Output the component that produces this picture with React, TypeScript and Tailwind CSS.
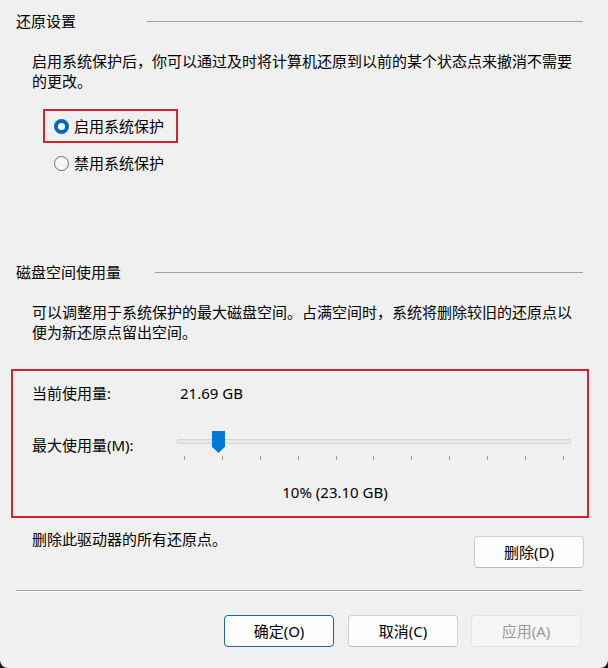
import React from "react";

function Radio({ checked }: { checked: boolean }) {
  return checked ? (
    <span className="flex h-[15px] w-[15px] shrink-0 items-center justify-center rounded-full bg-[#0067c0]">
      <span className="h-[7px] w-[7px] rounded-full bg-white" />
    </span>
  ) : (
    <span className="h-[15px] w-[15px] shrink-0 rounded-full border border-[#6f6f6f] bg-[#f6f6f6]" />
  );
}

function Btn({
  children,
  variant = "normal",
  className = "",
}: {
  children: React.ReactNode;
  variant?: "normal" | "primary" | "disabled";
  className?: string;
}) {
  const styles =
    variant === "primary"
      ? "border-[#1d63a8] bg-[#fdfdfd] text-black"
      : variant === "disabled"
      ? "border-[#e3e3e3] bg-[#f5f5f5] text-[#9a9a9a]"
      : "border-[#d0d0d0] border-b-[#bcbcbc] bg-[#fdfdfd] text-black";
  return (
    <div
      className={`flex h-[32px] w-[110px] items-center justify-center rounded-[4px] border ${styles} ${className}`}
    >
      {children}
    </div>
  );
}

export default function App() {
  return (
    <div className="h-[668px] w-[608px] bg-[#1c1c1c]">
      <div className="flex h-full w-full flex-col rounded-b-[8px] bg-[#f0f0f0] font-['Noto_Sans','Noto_Sans_CJK_SC',sans-serif] text-[15px] leading-[20px] text-black">
        {/* Section 1 heading */}
        <div className="mt-[11px] flex items-center pl-4 pr-[25px]">
          <span>还原设置</span>
          <div className="ml-[71px] h-px flex-1 bg-[#a0a0a0]" />
        </div>

        <p className="mt-[20px] pl-[32px]">
          启用系统保护后，你可以通过及时将计算机还原到以前的某个状态点来撤消不需要
          <br />
          的更改。
        </p>

        <div className="ml-[43px] mt-[18px] flex w-fit items-center border-2 border-[#d3212d] py-[5px] pl-[9px] pr-[12px]">
          <Radio checked />
          <span className="ml-[5px]">启用系统保护</span>
        </div>

        <div className="ml-[54px] mt-[10px] flex items-center">
          <Radio checked={false} />
          <span className="ml-[5px]">禁用系统保护</span>
        </div>

        {/* Section 2 heading */}
        <div className="mt-[89px] flex items-center pl-4 pr-[25px]">
          <span>磁盘空间使用量</span>
          <div className="ml-[34px] h-px flex-1 bg-[#a0a0a0]" />
        </div>

        <p className="mt-[20px] pl-[32px]">
          可以调整用于系统保护的最大磁盘空间。占满空间时，系统将删除较旧的还原点以
          <br />
          便为新还原点留出空间。
        </p>

        <div className="ml-[11px] mt-[27px] box-border flex h-[149px] w-[578px] flex-col border-2 border-[#d3212d] pt-[12px]">
          <div className="flex pl-[19px]">
            <span className="w-[148px]">当前使用量:</span>
            <span>21.69 GB</span>
          </div>

          <div className="mt-[26px] flex h-[32px] items-center pl-[19px]">
            <span className="w-[145px]">最大使用量(M):</span>
            <div className="relative h-[32px] w-[394px]">
              <div className="mt-[10px] h-[5px] w-full rounded-[1px] border border-[#d6d6d6] bg-[#e7e7e7]" />
              <div className="ml-[7px] mt-[12px] flex w-[380px] justify-between">
                {Array.from({ length: 11 }).map((_, i) => (
                  <span key={i} className="h-[4px] w-px bg-[#9c9c9c]" />
                ))}
              </div>
              <div className="absolute left-[35px] top-[2px] h-[22px] w-[13px] bg-[#0078d4] [clip-path:polygon(0_0,100%_0,100%_72%,50%_100%,0_72%)]" />
            </div>
          </div>

          <div className="ml-[172px] mt-[21px] w-[300px] text-center">10% (23.10 GB)</div>
        </div>

        <div className="mt-[11px] flex justify-between pl-[32px] pr-[24px]">
          <span>删除此驱动器的所有还原点。</span>
          <Btn className="mt-[7px]">删除(D)</Btn>
        </div>

        <div className="ml-4 mt-[22px] w-[566px]">
          <div className="h-px bg-[#a0a0a0]" />
          <div className="h-px bg-white" />
        </div>

        <div className="mt-[23px] flex justify-end pr-[27px]">
          <Btn variant="primary">确定(O)</Btn>
          <Btn className="ml-[14px]">取消(C)</Btn>
          <Btn variant="disabled" className="ml-[13px]">应用(A)</Btn>
        </div>
      </div>
    </div>
  );
}
